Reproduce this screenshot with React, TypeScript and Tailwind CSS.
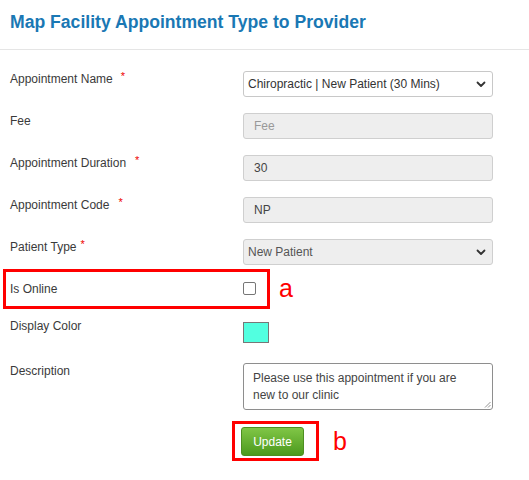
import React from 'react'

const Req = ({ gap = 'ml-[8px]' }: { gap?: string }) => (
  <span className={`${gap} text-[11px] text-[#e00] align-top leading-[10px]`}>*</span>
)

const Chevron = () => (
  <svg width="10" height="7" viewBox="0 0 10 7" className="shrink-0">
    <path d="M1.5 1.5 L5 5 L8.5 1.5" fill="none" stroke="#333" strokeWidth="1.8" strokeLinecap="round" strokeLinejoin="round" />
  </svg>
)

export default function App() {
  return (
    <div className="w-[529px] h-[480px] bg-white font-['Liberation_Sans',Arial,sans-serif] text-[#3a3a3a] overflow-hidden">
      {/* header */}
      <div className="h-[50px] border-b border-[#e5e5e5] px-[10px] pt-[11px]">
        <h1 className="text-[17.6px] leading-[22px] font-bold text-[#1a78b4]">Map Facility Appointment Type to Provider</h1>
      </div>

      <div className="px-[10px] pt-[21px] text-[12px] leading-[16px]">
        {/* appointment name */}
        <div className="flex mb-[16px]">
          <div className="w-[233px]">Appointment Name<Req gap="ml-[8px]" /></div>
          <div className="w-[250px] h-[26px] border border-[#c8c8c8] rounded-[3px] bg-white flex items-center justify-between pl-[4px] pr-[6px] text-[#333]">
            <span>Chiropractic | New Patient (30 Mins)</span>
            <Chevron />
          </div>
        </div>

        {/* fee */}
        <div className="flex mb-[16px]">
          <div className="w-[233px]">Fee</div>
          <div className="w-[250px] h-[26px] border border-[#cfcfcf] rounded-[3px] bg-[#eeeeee] flex items-center pl-[10px] text-[#999]">Fee</div>
        </div>

        {/* duration */}
        <div className="flex mb-[16px]">
          <div className="w-[233px]">Appointment Duration<Req gap="ml-[9px]" /></div>
          <div className="w-[250px] h-[26px] border border-[#cfcfcf] rounded-[3px] bg-[#eeeeee] flex items-center pl-[10px] text-[#444]">30</div>
        </div>

        {/* code */}
        <div className="flex mb-[16px]">
          <div className="w-[233px]">Appointment Code<Req gap="ml-[9px]" /></div>
          <div className="w-[250px] h-[26px] border border-[#cfcfcf] rounded-[3px] bg-[#eeeeee] flex items-center pl-[10px] text-[#444]">NP</div>
        </div>

        {/* patient type */}
        <div className="flex mb-[16px]">
          <div className="w-[233px]">Patient Type<Req gap="ml-[4px]" /></div>
          <div className="w-[250px] h-[26px] border border-[#cfcfcf] rounded-[3px] bg-[#eeeeee] flex items-center justify-between pl-[4px] pr-[6px] text-[#555]">
            <span>New Patient</span>
            <Chevron />
          </div>
        </div>

        {/* is online */}
        <div className="relative flex h-[37px]">
          <div className="w-[233px]">Is Online</div>
          <div className="mt-[1px] w-[13px] h-[13px] border border-[#767676] rounded-[2px] bg-white" />
          <div className="absolute left-[-7px] top-[-12px] w-[267px] h-[40px] border-[3px] border-[#f00]" />
          <span className="absolute left-[269px] top-[-5px] text-[25px] leading-[25px] text-[#f00]">a</span>
        </div>

        {/* display color */}
        <div className="flex h-[45px]">
          <div className="w-[233px]">Display Color</div>
          <div className="mt-[4px] w-[26px] h-[21px] border border-[#777] bg-[#52ffe0]" />
        </div>

        {/* description */}
        <div className="flex mb-[17px]">
          <div className="w-[233px]">Description</div>
          <div className="relative w-[250px] h-[47px] border border-[#8e8e8e] rounded-[3px] bg-white pl-[9px] pr-[24px] pt-[6px] leading-[17px] text-[#444]">
            Please use this appointment if you are new to our clinic
            <svg width="7" height="7" viewBox="0 0 7 7" className="absolute right-[1px] bottom-[1px]">
              <path d="M6.5 1 L1 6.5 M6.5 4 L4 6.5" stroke="#888" strokeWidth="0.9" />
            </svg>
          </div>
        </div>

        {/* update */}
        <div className="relative ml-[231px]">
          <button className="w-[63px] h-[29px] rounded-[3px] border border-[#4d8f21] bg-gradient-to-b from-[#80c646] to-[#4c9a1c] text-white text-[12px] font-medium">
            Update
          </button>
          <div className="absolute left-[-9px] top-[-6px] w-[87px] h-[40px] border-[3px] border-[#f00]" />
          <span className="absolute left-[92px] top-[2px] text-[25px] leading-[25px] text-[#f00]">b</span>
        </div>
      </div>
    </div>
  )
}
